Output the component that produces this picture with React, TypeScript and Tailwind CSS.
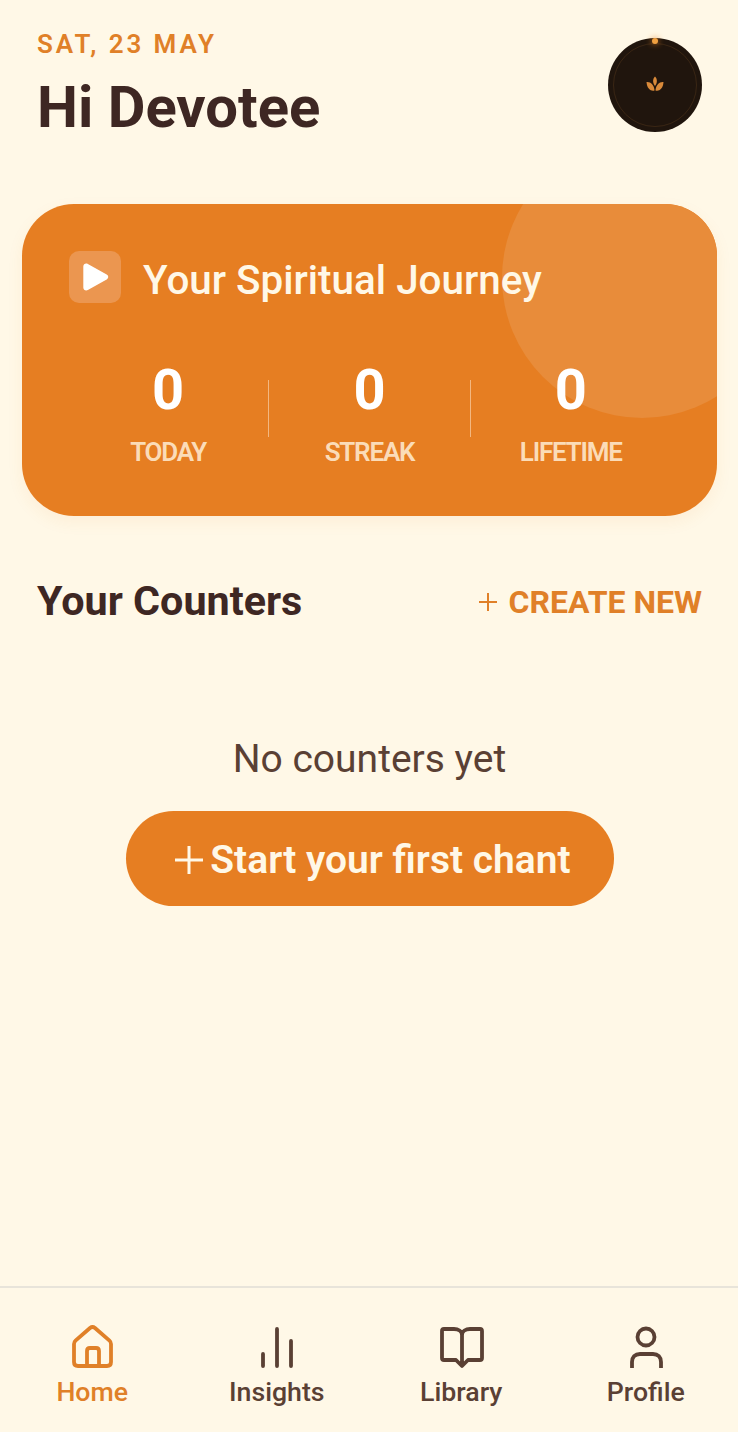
import React from "react";

function Stat({ value, label }: { value: string; label: string }) {
  return (
    <div className="flex-1 flex flex-col items-center">
      <div className="text-[56px] leading-[70px] font-bold text-white">{value}</div>
      <div className="mt-[12px] text-[26px] leading-[30px] font-semibold text-[#fbdcb8] tracking-[-1.2px]">{label}</div>
    </div>
  );
}

function Divider() {
  return <div className="w-px h-[57px] bg-[#f3b780] mt-[25px] shrink-0" />;
}

function NavItem({ label, active, children }: { label: string; active?: boolean; children: React.ReactNode }) {
  return (
    <div className={`flex-1 flex flex-col items-center ${active ? "text-[#e08028]" : "text-[#5a4034]"}`}>
      <svg width="50" height="44" viewBox="0 0 50 44" fill="none" stroke="currentColor" strokeWidth="3.8" strokeLinejoin="round">
        {children}
      </svg>
      <div className="text-[26.7px] leading-[32px] font-medium mt-[7px]">{label}</div>
    </div>
  );
}

export default function App() {
  return (
    <div className="w-[738px] h-[1432px] bg-[#fff8e7] flex flex-col overflow-hidden font-['Roboto',sans-serif]">
      <div className="flex justify-between items-start pl-[37px] pr-[36px] pt-[28px]">
        <div>
          <div className="text-[26px] leading-[32px] font-semibold tracking-[2.9px] text-[#e08028]">SAT, 23 MAY</div>
          <div className="text-[58px] leading-[70px] font-bold text-[#3e2723] mt-[12px]">Hi Devotee</div>
        </div>
        <div className="relative w-[94px] h-[94px] rounded-full bg-[#20150d] mt-[10px] flex items-center justify-center">
          <div className="absolute inset-[5px] rounded-full border border-[#3a2614]" />
          <div className="absolute top-[0px] left-[44px] w-[6px] h-[6px] rounded-full bg-[#f0a040] shadow-[0_0_6px_#e08028]" />
          <svg width="18" height="16" viewBox="0 0 18 16" className="relative mt-[-2px]">
            <path d="M9 0.5C11.5 3 11.5 7 9 10C6.5 7 6.5 3 9 0.5Z" fill="#d98a3a" />
            <path d="M0.5 6C4.5 5.5 8 8.5 8.5 14.5C5 15.5 1 13 0.5 6Z" fill="#d98a3a" />
            <path d="M17.5 6C13.5 5.5 10 8.5 9.5 14.5C13 15.5 17 13 17.5 6Z" fill="#d98a3a" />
          </svg>
        </div>
      </div>

      <div className="relative ml-[22px] w-[695px] mt-[62px] h-[312px] rounded-[52px] bg-[#e67e22] shadow-[0_6px_16px_rgba(230,126,34,0.08)]">
        <div className="absolute inset-0 rounded-[52px] overflow-hidden">
          <div className="absolute left-[480px] top-[-66px] w-[280px] h-[280px] rounded-full bg-[#e88c3a]" />
        </div>
        <div className="relative pl-[47px] pt-[47px] flex items-start gap-[22px]">
          <div className="w-[52px] h-[52px] rounded-[10px] bg-[#eb9650] flex items-center justify-center">
            <svg width="32" height="32" viewBox="0 0 26 26">
              <path d="M3.5 4.5C3.5 2.5 5.5 1.4 7.2 2.4L22.5 11C24.2 12 24.2 14 22.5 15L7.2 23.6C5.5 24.6 3.5 23.5 3.5 21.5Z" fill="#fff" />
            </svg>
          </div>
          <div className="text-[40.4px] leading-[52px] font-medium text-[#fff8e7] mt-[4px]">Your Spiritual Journey</div>
        </div>
        <div className="relative flex mt-[48px] pl-[46px] pr-[46px]">
          <Stat value="0" label="TODAY" />
          <Divider />
          <Stat value="0" label="STREAK" />
          <Divider />
          <Stat value="0" label="LIFETIME" />
        </div>
      </div>

      <div className="flex justify-between items-center pl-[37px] pr-[36px] mt-[60px]">
        <div className="text-[41.3px] leading-[50px] font-bold text-[#3e2723]">Your Counters</div>
        <div className="flex items-center gap-[11px] pt-[2px] text-[#e08028]">
          <svg width="20" height="20" viewBox="0 0 20 20" stroke="currentColor" strokeWidth="2" fill="none">
            <path d="M10 1V19M1 10H19" />
          </svg>
          <span className="text-[32px] leading-[40px] font-bold">CREATE NEW</span>
        </div>
      </div>

      <div className="flex flex-col items-center mt-[110px] pl-[1px]">
        <div className="text-[39px] leading-[46px] text-[#5a4034]">No counters yet</div>
        <div className="mt-[29px] w-[488px] h-[95px] pt-[3px] pl-[6px] rounded-full bg-[#e67e22] flex items-center justify-center gap-[6px] text-[#fff8e7]">
          <svg width="30" height="30" viewBox="0 0 30 30" stroke="currentColor" strokeWidth="3" fill="none">
            <path d="M15 1V29M1 15H29" />
          </svg>
          <span className="text-[39px] leading-[46px] font-semibold">Start your first chant</span>
        </div>
      </div>

      <div className="mt-auto h-[146px] border-t-2 border-[#e8e4da] flex pt-[37px]">
        <NavItem label="Home" active>
          <path d="M7 19C7 17.5 7.5 16.5 8.5 15.6L23 3C24.5 1.8 26.5 1.8 28 3L42.5 15.6C43.5 16.5 44 17.5 44 19V37C44 39.5 42.5 41 40 41H11C8.5 41 7 39.5 7 37Z" />
          <path d="M20 41V26C20 24 21 23 23 23H29C31 23 32 24 32 26V41" />
        </NavItem>
        <NavItem label="Insights">
          <path strokeLinecap="round" d="M11 41V29M25 41V4M39 41V16" />
        </NavItem>
        <NavItem label="Library">
          <path d="M26 10C26 6 22 4 18 4H8Q6 4 6 6V33Q6 35 8 35H20L26 41L32 35H44Q46 35 46 33V6Q46 4 44 4H34C30 4 26 6 26 10V41" />
        </NavItem>
        <NavItem label="Profile">
          <circle cx="25" cy="12" r="8.5" />
          <path d="M11 43V37C11 32 14 29 19 29H32C37 29 40 32 40 37V43" />
        </NavItem>
      </div>
    </div>
  );
}
